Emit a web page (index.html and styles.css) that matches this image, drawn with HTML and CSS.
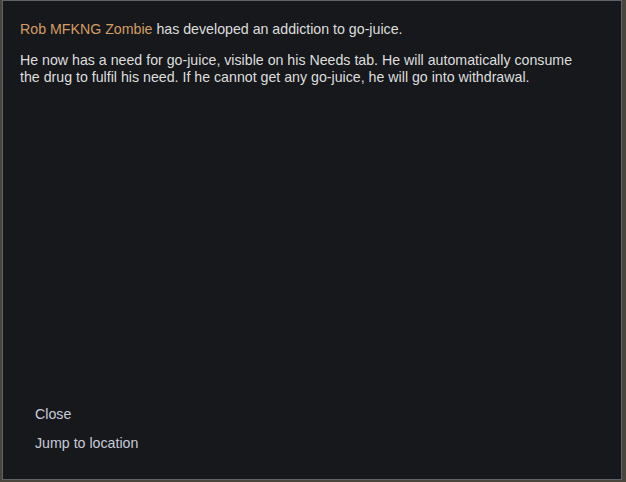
FILE: index.html
```html
<!DOCTYPE html>
<html>
<head>
<meta charset="utf-8">
<link rel="stylesheet" href="styles.css">
</head>
<body>
<div class="letter">
  <div class="message">
    <p class="line"><span class="name">Rob MFKNG Zombie</span> has developed an addiction to go-juice.</p>
    <p class="para">He now has a need for go-juice, visible on his Needs tab. He will automatically consume the drug to fulfil his need. If he cannot get any go-juice, he will go into withdrawal.</p>
  </div>
  <div class="options">
    <div class="option">Close</div>
    <div class="option">Jump to location</div>
  </div>
</div>
</body>
</html>
```

FILE: styles.css
```css
html, body {
  margin: 0;
  padding: 0;
}
body {
  width: 626px;
  height: 482px;
  background: #4a453d;
  overflow: hidden;
  font-family: "Liberation Sans", Arial, sans-serif;
  font-size: 14.2px;
}
.letter {
  margin-left: 2px;
  width: 620px;
  height: 480px;
  box-sizing: border-box;
  border: 1px solid #5f6369;
  background: #16181c;
  display: flex;
  flex-direction: column;
  justify-content: space-between;
}
.message {
  padding: 20px 17px 0 17px;
  color: #dedede;
  line-height: 17px;
}
.message p {
  margin: 0;
}
.message .para {
  margin-top: 14px;
  width: 565px;
}
.name {
  color: #d49d63;
}
.options {
  padding: 0 0 21px 32px;
  display: flex;
  flex-direction: column;
}
.option {
  height: 29px;
  line-height: 29px;
  color: #c9cbd8;
}
```
